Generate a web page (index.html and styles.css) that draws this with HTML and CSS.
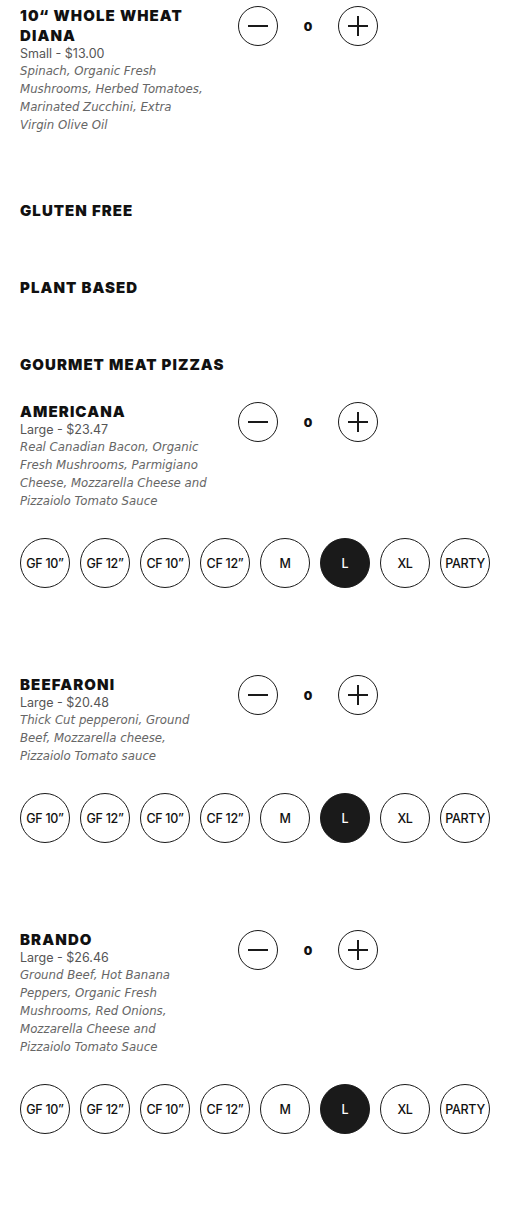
FILE: index.html
```html
<!DOCTYPE html>
<html lang="en">
<head>
<meta charset="utf-8">
<title>Menu</title>
<link rel="stylesheet" href="styles.css">
</head>
<body>
<main class="menu">
  <article class="item">
    <div class="item-info">
      <h3 class="item-name">10“ WHOLE WHEAT DIANA</h3>
      <p class="item-price">Small - $13.00</p>
      <p class="item-desc">Spinach, Organic Fresh Mushrooms, Herbed Tomatoes, Marinated Zucchini, Extra Virgin Olive Oil</p>
    </div>
    <div class="qty">
      <button class="qty-btn" aria-label="Decrease"><svg viewBox="0 0 40 40" width="40" height="40"><path d="M10 20H30" stroke="#1a1a1a" stroke-width="2"/></svg></button>
      <span class="qty-count">0</span>
      <button class="qty-btn" aria-label="Increase"><svg viewBox="0 0 40 40" width="40" height="40"><path d="M10 20H30M20 10V30" stroke="#1a1a1a" stroke-width="2"/></svg></button>
    </div>
  </article>

  <h2 class="section-title first">GLUTEN FREE</h2>
  <h2 class="section-title">PLANT BASED</h2>
  <h2 class="section-title">GOURMET MEAT PIZZAS</h2>

  <article class="item has-sizes">
    <div class="item-info">
      <h3 class="item-name">AMERICANA</h3>
      <p class="item-price">Large - $23.47</p>
      <p class="item-desc">Real Canadian Bacon, Organic Fresh Mushrooms, Parmigiano Cheese, Mozzarella Cheese and Pizzaiolo Tomato Sauce</p>
    </div>
    <div class="qty">
      <button class="qty-btn" aria-label="Decrease"><svg viewBox="0 0 40 40" width="40" height="40"><path d="M10 20H30" stroke="#1a1a1a" stroke-width="2"/></svg></button>
      <span class="qty-count">0</span>
      <button class="qty-btn" aria-label="Increase"><svg viewBox="0 0 40 40" width="40" height="40"><path d="M10 20H30M20 10V30" stroke="#1a1a1a" stroke-width="2"/></svg></button>
    </div>
    <div class="sizes">
      <span class="size">GF 10”</span><span class="size">GF 12”</span><span class="size">CF 10”</span><span class="size">CF 12”</span><span class="size">M</span><span class="size active">L</span><span class="size">XL</span><span class="size">PARTY</span>
    </div>
  </article>

  <article class="item has-sizes">
    <div class="item-info">
      <h3 class="item-name">BEEFARONI</h3>
      <p class="item-price">Large - $20.48</p>
      <p class="item-desc">Thick Cut pepperoni, Ground Beef, Mozzarella cheese, Pizzaiolo Tomato sauce</p>
    </div>
    <div class="qty">
      <button class="qty-btn" aria-label="Decrease"><svg viewBox="0 0 40 40" width="40" height="40"><path d="M10 20H30" stroke="#1a1a1a" stroke-width="2"/></svg></button>
      <span class="qty-count">0</span>
      <button class="qty-btn" aria-label="Increase"><svg viewBox="0 0 40 40" width="40" height="40"><path d="M10 20H30M20 10V30" stroke="#1a1a1a" stroke-width="2"/></svg></button>
    </div>
    <div class="sizes">
      <span class="size">GF 10”</span><span class="size">GF 12”</span><span class="size">CF 10”</span><span class="size">CF 12”</span><span class="size">M</span><span class="size active">L</span><span class="size">XL</span><span class="size">PARTY</span>
    </div>
  </article>

  <article class="item has-sizes">
    <div class="item-info">
      <h3 class="item-name">BRANDO</h3>
      <p class="item-price">Large - $26.46</p>
      <p class="item-desc">Ground Beef, Hot Banana Peppers, Organic Fresh Mushrooms, Red Onions, Mozzarella Cheese and Pizzaiolo Tomato Sauce</p>
    </div>
    <div class="qty">
      <button class="qty-btn" aria-label="Decrease"><svg viewBox="0 0 40 40" width="40" height="40"><path d="M10 20H30" stroke="#1a1a1a" stroke-width="2"/></svg></button>
      <span class="qty-count">0</span>
      <button class="qty-btn" aria-label="Increase"><svg viewBox="0 0 40 40" width="40" height="40"><path d="M10 20H30M20 10V30" stroke="#1a1a1a" stroke-width="2"/></svg></button>
    </div>
    <div class="sizes">
      <span class="size">GF 10”</span><span class="size">GF 12”</span><span class="size">CF 10”</span><span class="size">CF 12”</span><span class="size">M</span><span class="size active">L</span><span class="size">XL</span><span class="size">PARTY</span>
    </div>
  </article>
</main>
</body>
</html>
```

FILE: styles.css
```css
html, body {
  margin: 0;
  padding: 0;
  background: #ffffff;
}

body {
  font-family: "Inter", "Liberation Sans", sans-serif;
  color: #1a1a1a;
}

.menu {
  padding: 6px 20px 40px;
}

.item {
  display: grid;
  grid-template-columns: 218px auto;
  align-items: start;
}

.item.has-sizes {
  margin-bottom: 87px;
}

.item-info {
  width: 188px;
}

.item-name {
  margin: 0;
  width: 210px;
  font-family: "Inter", sans-serif;
  font-weight: 900;
  font-size: 15px;
  line-height: 20px;
  letter-spacing: 1.1px;
  color: #111;
}

.item-price {
  margin: 0;
  font-family: "Inter", sans-serif;
  font-weight: 400;
  font-size: 12.5px;
  line-height: 16px;
  color: #555;
}

.item-desc {
  margin: 0;
  font-family: "DejaVu Sans", sans-serif;
  font-style: italic;
  font-weight: 400;
  font-size: 11.75px;
  line-height: 18px;
  color: #666;
}

.qty {
  display: flex;
  align-items: center;
}

.qty-btn {
  width: 40px;
  height: 40px;
  padding: 0;
  border: 1.3px solid #1a1a1a;
  border-radius: 50%;
  background: #fff;
  display: flex;
  align-items: center;
  justify-content: center;
  overflow: hidden;
}

.qty-btn svg {
  display: block;
  flex: none;
}

.qty-count {
  width: 60px;
  text-align: center;
  font-family: "Inter", sans-serif;
  font-weight: 900;
  font-size: 12px;
  color: #111;
}

.sizes {
  grid-column: 1 / -1;
  display: flex;
  gap: 10px;
  margin-top: 28px;
}

.size {
  width: 50px;
  height: 50px;
  box-sizing: border-box;
  border: 1px solid #1a1a1a;
  border-radius: 50%;
  display: flex;
  align-items: center;
  justify-content: center;
  font-family: "Inter", sans-serif;
  font-weight: 500;
  font-size: 12.5px;
  letter-spacing: -0.3px;
  white-space: nowrap;
  color: #111;
}

.size.active {
  background: #1a1a1a;
  color: #fff;
}

.section-title {
  margin: 57px 0 0;
  font-family: "Inter", sans-serif;
  font-weight: 900;
  font-size: 15px;
  line-height: 20px;
  letter-spacing: 1.05px;
  color: #111;
}

.section-title.first {
  margin-top: 67px;
}

.section-title + .item {
  margin-top: 27px;
}
```
